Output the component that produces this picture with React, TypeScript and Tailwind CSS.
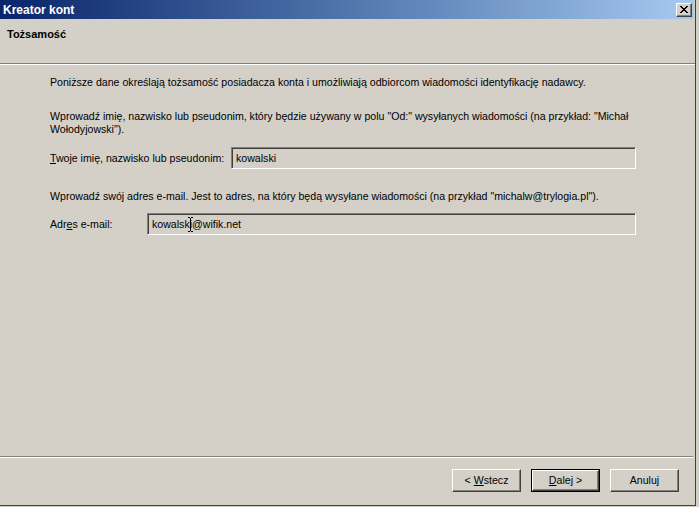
import React from 'react';

const font = { fontFamily: '"Liberation Sans", Arial, sans-serif' };

function CloseGlyph() {
  return (
    <svg width="8" height="7" viewBox="0 0 8 7" shapeRendering="crispEdges">
      <path d="M0 0h2v1h1v1h2v-1h1v-1h2v1h-1v1h-1v1h-1v1h1v1h1v1h1v1h-2v-1h-1v-1h-2v1h-1v1h-2v-1h1v-1h1v-1h1v-1h-1v-1h-1v-1h-1z" fill="#000" />
    </svg>
  );
}

function Button({ children, primary }: { children: React.ReactNode; primary?: boolean }) {
  const inner = (
    <div className="flex h-full w-full items-center justify-center border border-t-white border-l-white border-r-[#404040] border-b-[#404040] shadow-[inset_-1px_-1px_#808080] text-[10.6px] text-black">
      {children}
    </div>
  );
  if (primary) {
    return <div className="h-[23px] w-[69px] border border-black">{inner}</div>;
  }
  return <div className="h-[23px] w-[69px]">{inner}</div>;
}

function Field({ value, width, cursor }: { value: string; width: string; cursor?: boolean }) {
  return (
    <div
      className={`relative flex h-[22px] items-center border border-t-[#808080] border-l-[#808080] border-r-white border-b-white bg-[#d4d0c8] pl-[4px] text-[10.6px] text-black shadow-[inset_1px_1px_#404040,inset_-1px_-1px_#d4d0c8] ${width}`}
    >
      {value}
      {cursor && (
        <svg className="absolute left-[40px] top-[3px]" width="5" height="15" viewBox="0 0 5 15">
          <path d="M0 0.5h2M3 0.5h2M2.5 1v13M0 14.5h2M3 14.5h2" stroke="#000" strokeWidth="1" fill="none" />
        </svg>
      )}
    </div>
  );
}

export default function App() {
  return (
    <div className="flex h-[507px] w-[699px] overflow-hidden bg-[#d4d0c8]" style={font}>
      <div className="flex h-[506px] w-[696px] flex-col border-r border-b border-[#404040]">
        {/* title bar */}
        <div className="flex h-[19px] items-center justify-between bg-gradient-to-r from-[#0a246a] to-[#a6caf0] pl-[3px] pr-[2px] mr-[1px]">
          <span className="text-[12px] font-bold leading-none text-white">Kreator kont</span>
          <div className="flex h-[14px] w-[16px] items-center justify-center border border-t-white border-l-white border-r-[#404040] border-b-[#404040] bg-[#d4d0c8] shadow-[inset_-1px_-1px_#808080]">
            <CloseGlyph />
          </div>
        </div>

        {/* header */}
        <div className="h-[44px] pl-[7px] pt-[7px]">
          <div className="text-[11px] font-bold text-black">Tożsamość</div>
        </div>
        <div className="h-[2px] border-t border-b border-t-[#808080] border-b-white" />

        {/* content */}
        <div className="flex-1 pl-[50px] pt-[11px] text-[10.6px] leading-[13px] text-black">
          <p className="whitespace-nowrap">
            Poniższe dane określają tożsamość posiadacza konta i umożliwiają odbiorcom wiadomości identyfikację nadawcy.
          </p>
          <p className="mt-[21px] whitespace-nowrap">
            Wprowadź imię, nazwisko lub pseudonim, który będzie używany w polu "Od:" wysyłanych wiadomości (na przykład: "Michał
            <br />
            Wołodyjowski").
          </p>
          <div className="mt-[11px] flex items-center">
            <span className="w-[181px] whitespace-nowrap">
              <span className="underline">T</span>woje imię, nazwisko lub pseudonim:
            </span>
            <Field value="kowalski" width="w-[405px]" />
          </div>
          <p className="mt-[21px] whitespace-nowrap">
            Wprowadź swój adres e-mail. Jest to adres, na który będą wysyłane wiadomości (na przykład "michalw@trylogia.pl").
          </p>
          <div className="mt-[10px] flex items-center">
            <span className="w-[97px] whitespace-nowrap">
              Adr<span className="underline">e</span>s e-mail:
            </span>
            <Field value="kowalski@wifik.net" width="w-[489px]" cursor />
          </div>
        </div>

        {/* bottom separator */}
        <div className="mr-[2px] h-[2px] border-t border-b border-t-[#808080] border-b-white" />

        {/* footer */}
        <div className="flex h-[47px] items-start justify-end gap-[10px] pr-[16px] pt-[11px]">
          <Button>
            &lt; <span className="ml-[3px] underline">W</span>stecz
          </Button>
          <Button primary>
            <span className="underline">D</span>alej &gt;
          </Button>
          <Button>Anuluj</Button>
        </div>
      </div>
    </div>
  );
}
